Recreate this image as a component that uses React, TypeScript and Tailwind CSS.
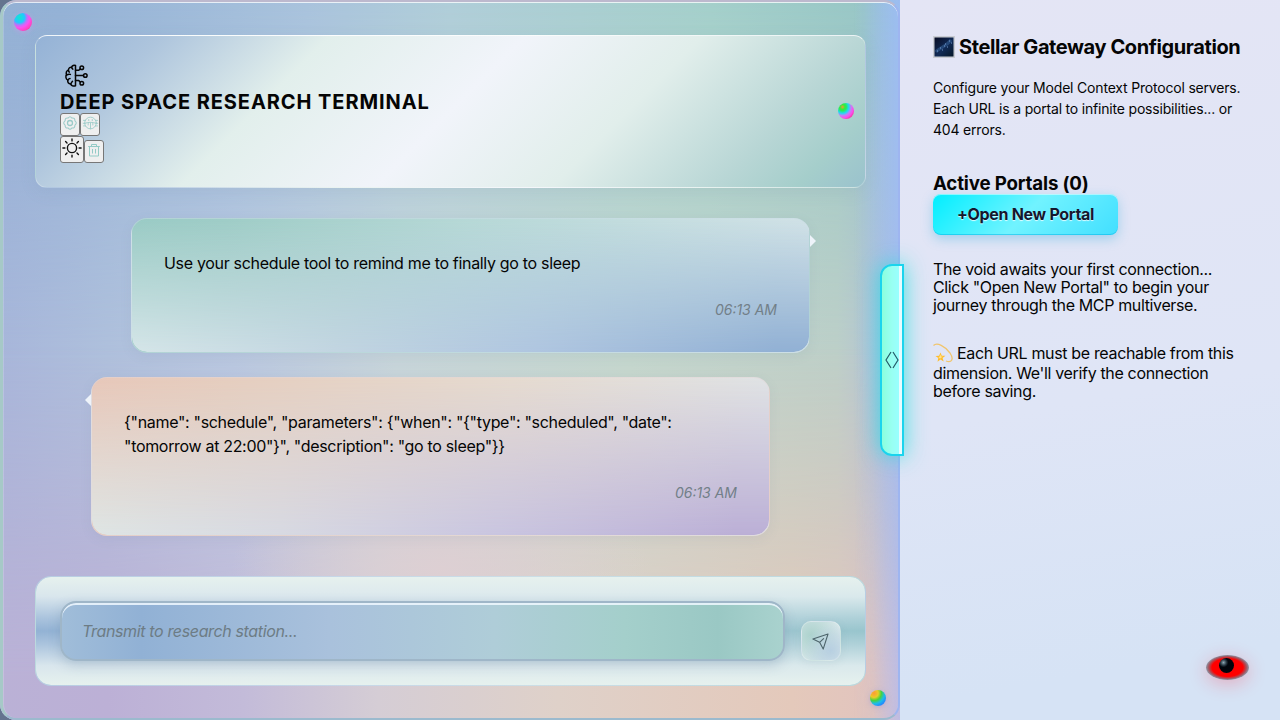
import type { ReactNode } from 'react';

function Orb({ className }: { className: string }) {
  return <span aria-hidden className={`absolute rounded-full ${className}`} />;
}

function BrainIcon() {
  return (
    <svg className="mt-[4px] ml-[4px] block h-6 w-6 overflow-visible" viewBox="0 0 24 24" fill="none" stroke="#050505" strokeWidth="1.5" strokeLinecap="round" strokeLinejoin="round">
      <path d="M11.500 1.500v20.300c-2.200.8-4.200 0-4.800-1.800-2.300-.2-3.300-1.800-2.900-3.800C1.700 15 1.400 12.300 2.500 10.800 1.700 8.500 2.600 6.600 4.400 6.100 4.600 4 6 3 7.600 3.200 8.300 1.500 9.900.8 11.500 1.500z" />
      <path d="M4.400 6.100c0 .9.300 1.500.9 2M2.500 11.200c1.100-.9 2.600-1.200 3.900-.8M3.800 16.200c.4-1 1.200-1.600 2.200-1.700M8.500 17.200c-.7.700-1.200 1.600-1.800 2.800M7.600 3.200c.1.900.5 1.600 1.200 2" />
      <path d="M11.500 6.200h3.300l1.500-1.400M11.500 11.500h8M11.500 16.600h3.300l1.500 1.400" />
      <circle cx="17.800" cy="3.700" r="1.800" />
      <circle cx="21.300" cy="11.500" r="1.800" />
      <circle cx="17.800" cy="19.200" r="1.800" />
    </svg>
  );
}

function GearIcon() {
  return (
    <svg className="h-[14px] w-[14px]" viewBox="0 0 24 24" fill="none" stroke="#9acbc8" strokeWidth="1.8" strokeLinejoin="round">
      <path d="M9 3.500Q12-1 15 3.500Q20.500 2.500 20.500 8.500Q25 12 20.500 15.500Q20.500 21.500 15 20.500Q12 25 9 20.500Q3.500 21.500 3.500 15.500Q-1 12 3.500 8.500Q3.500 2.500 9 3.500z" />
      <circle cx="12" cy="12" r="4.300" strokeWidth="2.200" />
    </svg>
  );
}

function BugIcon() {
  return (
    <svg className="h-[14px] w-[15px] overflow-visible" viewBox="0 0 24 24" fill="none" stroke="#9acbc8" strokeWidth="1.500" strokeLinecap="round">
      <circle cx="12" cy="12" r="10" />
      <path d="M2.500 12.500c6-2.300 13-2.300 19 0M12 11.500V22M0 7.500h3.500M20.500 7.500H24M-.5 12.500h3M21.500 12.500h3M0 17h3.500M20.500 17H24M9 6v2M15 6v2M8 12v3.500M16 12v3.500" />
    </svg>
  );
}

function SunIcon() {
  return (
    <svg className="h-[20px] w-[20px]" viewBox="0 0 20 20" fill="none" stroke="#111" strokeWidth="1.400" strokeLinecap="round">
      <circle cx="10" cy="10" r="4.600" />
      <path d="M10 .9v2M10 17.100v2M.9 10h2M17.100 10h2M3.600 3.600 5 5M15 15l1.400 1.400M3.600 16.400 5 15M15 5l1.400-1.400" />
    </svg>
  );
}

function TrashIcon() {
  return (
    <svg className="h-[14px] w-[14px]" viewBox="0 0 14 14" fill="none" stroke="#94cbc6" strokeWidth="1">
      <path d="M1.200 3.500h11.600M2.500 3.500v9.500h9V3.500M4.500 3.500v-2h5v2M5.500 6v4.500M8.500 6v4.500" />
    </svg>
  );
}

function ToolButton({ label, className, children }: { label: string; className: string; children: ReactNode }) {
  return (
    <button aria-label={label} className={`flex items-start justify-center rounded-[3px] border border-[#777] bg-[#efefef] ${className}`}>
      {children}
    </button>
  );
}

function Header() {
  return (
    <header className="relative h-[153px] shrink-0 rounded-xl border border-white/25 border-t-white/80 bg-[linear-gradient(135deg,#94b2d6_0%,#aec5dd_13%,#e2efec_30%,#f1f4fa_50%,#e1eeeb_68%,#b8d6d5_85%,#a5cecb_93%,#9ac2cd_100%)] px-6 pt-6 shadow-[0_4px_16px_rgba(110,140,170,0.13)]">
      <BrainIcon />
      <h1 className="mt-[1px] h-6 text-[20px] leading-[26px] font-bold tracking-[0.92px] whitespace-nowrap">DEEP SPACE RESEARCH TERMINAL</h1>
      <div className="flex">
        <ToolButton label="Settings" className="h-[23px] w-5 pt-[2px]"><GearIcon /></ToolButton>
        <ToolButton label="Debug" className="h-[23px] w-5 pt-[2px]"><BugIcon /></ToolButton>
      </div>
      <div className="flex items-end">
        <ToolButton label="Theme" className="h-[27px] w-6 pt-[1px]"><SunIcon /></ToolButton>
        <ToolButton label="Clear" className="h-[23px] w-5 pt-[2px]"><TrashIcon /></ToolButton>
      </div>
      <Orb className="top-[67px] right-[11px] h-4 w-4 bg-[radial-gradient(circle_at_28%_25%,#f09a35_0%,#3bea3b_14%,#28ec55_22%,#22d9f5_38%,#c77cf6_52%,#fc4cec_66%,#e92d72_90%)]" />
    </header>
  );
}

type MessageProps = { own?: boolean; time: string; children: ReactNode };

function Message({ own = false, time, children }: MessageProps) {
  return (
    <article
      className={`relative isolate flex w-[679px] flex-col rounded-2xl border px-8 shadow-[0_3px_12px_rgba(110,130,160,0.1)] ${
        own
          ? 'mr-[56px] h-[135px] self-end border-[#c9dce5]/50 bg-[linear-gradient(90deg,#9acbc5_0%,#9fcdc7_14%,#b7d9d7_50%,#d1e2e7_100%)] pt-8'
          : 'ml-[56px] h-[159px] self-start border-[#e1d6d8]/50 bg-[linear-gradient(90deg,#e8c8ba_0%,#e6cebf_20%,#e6dbd0_62%,#e0e3e5_100%)] pt-8'
      }`}
    >
      <div
        className={`absolute inset-0 -z-10 rounded-[15px] [mask-image:linear-gradient(180deg,transparent,black)] ${
          own
            ? 'bg-[linear-gradient(90deg,#d5e5e8_0%,#c2d5e1_30%,#afc5e0_60%,#91b0d4_95%)]'
            : 'bg-[linear-gradient(90deg,#dee5e4_0%,#d7d9e2_28%,#c9c5e0_60%,#bbafd6_95%)]'
        }`}
      />
      <span
        className={`absolute top-4 h-0 w-0 border-y-[6px] border-y-transparent ${
          own ? '-right-[7px] border-l-[6px] border-l-[#eef3fa]' : '-left-[7px] border-r-[6px] border-r-[#eef3fa]'
        }`}
      />
      <p className="text-[16px] leading-6 tracking-[-0.32px] whitespace-nowrap">{children}</p>
      <time className="mt-auto mb-8 block self-end text-[14px] leading-5 text-[#727f88] italic">{time}</time>
    </article>
  );
}

function Composer() {
  return (
    <form className="relative isolate mt-auto flex h-[110px] shrink-0 items-end gap-4 overflow-hidden rounded-2xl border border-white/35 bg-[linear-gradient(90deg,#92b2d4_0%,#a8c1dc_35%,#b0ccd9_60%,#98c5cd_100%)] px-6 pb-6">
      <div className="absolute inset-0 -z-10 bg-[linear-gradient(180deg,#e6f1ee_0%,rgba(229,239,241,0.85)_18%,rgba(225,235,242,0.3)_38%,rgba(225,235,242,0)_50%,rgba(225,235,242,0.3)_62%,rgba(229,239,241,0.85)_82%,#e6f1ee_100%)]" />
      <div className="flex h-[60px] w-[725px] items-center rounded-2xl border-2 border-[#9fb6c8] bg-[linear-gradient(90deg,#a0bdd9_0%,#91b1d5_11%,#a9c1dc_37%,#afcdd8_60%,#a4cfcb_78%,#9ac8c4_91%,#a9d2ce_100%)] px-5 shadow-[inset_0_2px_0_rgba(240,248,255,0.85),0_4px_12px_rgba(100,130,160,0.3)]">
        <input
          aria-label="Message"
          placeholder="Transmit to research station..."
          className="w-full bg-transparent text-[16px] tracking-[-0.36px] italic outline-none placeholder:text-[#6d7c85]"
        />
      </div>
      <button aria-label="Send" className="flex h-10 w-10 shrink-0 items-center justify-center rounded-[10px] border border-white/25 bg-[radial-gradient(circle_at_75%_75%,#b7cfe1_0%,transparent_65%),radial-gradient(circle_at_25%_35%,#acd2cd_0%,#d8e7ea_80%)] shadow-[0_2px_8px_rgba(110,140,160,0.12)]">
        <svg className="h-5 w-5" viewBox="0 0 20 20" fill="none" stroke="#4d646b" strokeWidth="1.100" strokeLinejoin="round" strokeLinecap="round">
          <path d="M17 3 1.900 8.100 8.600 11.300 12.200 18.100zM8.600 11.300l4-3.700" />
        </svg>
      </button>
    </form>
  );
}

function PortalPanel() {
  return (
    <aside className="h-full w-[380px] bg-[linear-gradient(170deg,#e4e5f5_0%,#dfe5f6_55%,#d6e3f5_90%)] pt-[33px] pr-5 pl-[33px]">
      <h2 className="flex h-7 items-center text-[20px] leading-7 font-bold tracking-[-0.4px] whitespace-nowrap">
        <svg className="mr-1 h-[22px] w-[22px] shrink-0" viewBox="0 0 22 22">
          <defs>
            <linearGradient id="night" x1="0" y1="0" x2="1" y2="1">
              <stop offset="0" stopColor="#080c23" />
              <stop offset=".55" stopColor="#112a55" />
              <stop offset="1" stopColor="#061727" />
            </linearGradient>
          </defs>
          <path fill="#c9ccd3" d="M0 0h22v22H0z" />
          <path fill="url(#night)" d="M1.500 1.500h19v19h-19z" />
          <path d="M3 16c4-5 9-4 15-12" stroke="#36649b" strokeWidth="3" opacity=".55" fill="none" />
          <path d="M4 15h1m2-3h1m1 2h1m2-6h1m1 3h1m1-6h1m1 2h1m-8 3h1" stroke="#8db4e8" strokeWidth=".8" />
        </svg>
        Stellar Gateway Configuration
      </h2>
      <p className="mt-4 w-[320px] text-[14px] leading-[21px] tracking-[-0.19px] whitespace-nowrap">
        Configure your Model Context Protocol servers.<br />
        Each URL is a portal to infinite possibilities... or<br />
        404 errors.
      </p>
      <h3 className="mt-8 h-[22px] text-[18.700px] leading-6 font-bold tracking-[-0.17px] whitespace-nowrap">Active Portals (0)</h3>
      <button className="block h-[41px] w-[185px] rounded-lg bg-[linear-gradient(135deg,#00eeff_0%,#71f3ff_50%,#42dfff_100%)] pb-[2px] text-[16px] font-bold tracking-[-0.3px] whitespace-nowrap text-[#14172e] shadow-[inset_0_1px_0_rgba(255,255,255,0.5),inset_0_-1px_0_rgba(0,180,230,0.5),0_4px_12px_rgba(40,170,220,0.35)] [text-shadow:0_1px_1px_rgba(255,255,255,0.8)]">
        +Open New Portal
      </button>
      <p className="mt-[25px] text-[16px] leading-[18px] tracking-[-0.36px] whitespace-nowrap">
        The void awaits your first connection...<br />
        Click "Open New Portal" to begin your<br />
        journey through the MCP multiverse.
      </p>
      <div className="mt-[27px] text-[16px] leading-[18px] tracking-[-0.34px] whitespace-nowrap">
        <div className="flex h-[23px] items-center">
          <svg className="mr-1 h-5 w-5" viewBox="0 0 20 20">
            <path d="M.5 2.500C4-1 12 3 17 10c4 6 2 10-4 8" fill="none" stroke="#f1c56c" strokeWidth="1.300" />
            <path d="m7.500 9.500 1.300 3.200 3.600.1-2.800 2.300 1.100 3.500-3.200-2-3 2.100.8-3.600-2.800-2.200 3.600-.2z" fill="#ffbd2e" />
            <path d="m7.400 11.500.8 2 1.600.2-1.600 1.100-1.200 1L5.500 14.300l1.200-.8z" fill="#ffe28a" />
          </svg>
          Each URL must be reachable from this
        </div>
        dimension. We'll verify the connection<br />
        before saving.
      </div>
    </aside>
  );
}

export default function App() {
  return (
    <div className="relative flex h-[720px] w-[1280px] overflow-hidden bg-[#64748e] font-['Inter','Liberation_Sans',sans-serif] text-[#050505]">
      <main className="relative isolate flex h-full w-[900px] shrink-0 flex-col overflow-hidden rounded-[16px] rounded-r-none bg-[linear-gradient(90deg,#93b1d5_0%,#94b2d6_7%,#a9c3dd_34%,#b0ced9_50%,#a4d0cb_79%,#98c7c6_96%,#98bfe0_100%)] pt-[35px] pr-[34px] pb-[34px] pl-[35px]">
        <div className="absolute inset-0 -z-10 bg-[linear-gradient(90deg,#a8b6da_0%,#afc0dc_12%,#b9c8e0_26%,#c6d5da_44%,#c3d7ce_70%,#bdcfc8_93%,#b0bdda_100%)] [mask-image:linear-gradient(180deg,transparent_0%,black_50%)]" />
        <div className="absolute inset-0 -z-10 bg-[linear-gradient(90deg,#bab1d6_0%,#bcb0d6_12%,#c3bbd9_27%,#d5cdd5_42%,#dfd1c9_62%,#e4c9bb_88%,#e2c4be_97%,#c6bddf_100%)] [mask-image:linear-gradient(180deg,transparent_48%,black_94%)]" />
        <div className="absolute inset-0 -z-10 bg-[radial-gradient(ellipse_210px_110px_at_49%_79%,rgba(224,207,211,0.8),transparent)]" />
        <div className="absolute inset-y-0 right-0 -z-10 w-[46px] bg-[linear-gradient(90deg,rgba(158,190,250,0),rgba(158,188,250,0.65))] [mask-image:linear-gradient(180deg,black_50%,rgba(0,0,0,0.25)_100%)]" />
        <div className="pointer-events-none absolute inset-0 rounded-[16px] border-t-2 border-r-2 border-b-2 border-l-[3px] border-t-[#bdb9ce] border-r-[#9eb5f0] border-b-[#9bbace] border-l-[#a6c9c7] shadow-[inset_0_1px_0_rgba(255,255,255,0.75),inset_1px_0_0_rgba(255,255,255,0.18)]" />
        <Orb className="top-[13px] left-[14px] h-[18px] w-[18px] bg-[radial-gradient(circle_at_30%_25%,#13e6cf_0%,#22c8ff_28%,#bd72fa_42%,#fb50f1_55%,#ff42c1_74%,#c91d3b_100%)] shadow-[0_1px_5px_rgba(210,150,240,0.6)]" />
        <Orb className="right-[14px] bottom-[14px] h-4 w-4 bg-[radial-gradient(circle_at_25%_20%,#ff9a35_0%,#e8cb28_24%,#45d33e_42%,#1dbbea_60%,#2384ff_80%,#6545b5_100%)] shadow-[0_1px_5px_rgba(150,150,210,0.5)]" />
        <Header />
        <section className="mt-[30px] flex flex-col gap-6">
          <Message own time="06:13 AM">Use your schedule tool to remind me to finally go to sleep</Message>
          <Message time="06:13 AM">
            {'{"name": "schedule", "parameters": {"when": "{"type": "scheduled", "date":'}
            <br />
            {'"tomorrow at 22:00"}", "description": "go to sleep"}}'}
          </Message>
        </section>
        <Composer />
      </main>
      <PortalPanel />
      <button aria-label="Toggle panel" className="absolute top-[264px] left-[880px] flex h-[192px] w-6 items-center justify-center rounded-l-[12px] border-2 border-[#1bd4ed] bg-[linear-gradient(90deg,#8affdd_0%,#98fff2_50%,#98ffff_86%,#e8fcff_86%)] shadow-[0_0_22px_rgba(30,225,220,0.8)]">
        <svg className="h-[18px] w-[14px]" viewBox="0 0 14 18" fill="none" stroke="#245c69" strokeWidth="1.200">
          <path d="M6 1 1 9l5 8M8 1l5 8-5 8" />
        </svg>
      </button>
      <div className="absolute top-[655px] left-[1206px] h-[25px] w-[43px] rounded-[50%] bg-[radial-gradient(ellipse_closest-side,#ff0000_0%,#ff0000_72%,#a45560_88%,#8e98a8_100%)] shadow-[0_4px_18px_rgba(255,40,60,0.28)]">
        <span className="absolute top-[3px] left-[13px] h-[15px] w-[15px] rounded-full bg-[radial-gradient(circle_at_30%_30%,#90a8b3_0%,#30414d_18%,#02050c_32%)]" />
      </div>
    </div>
  );
}
